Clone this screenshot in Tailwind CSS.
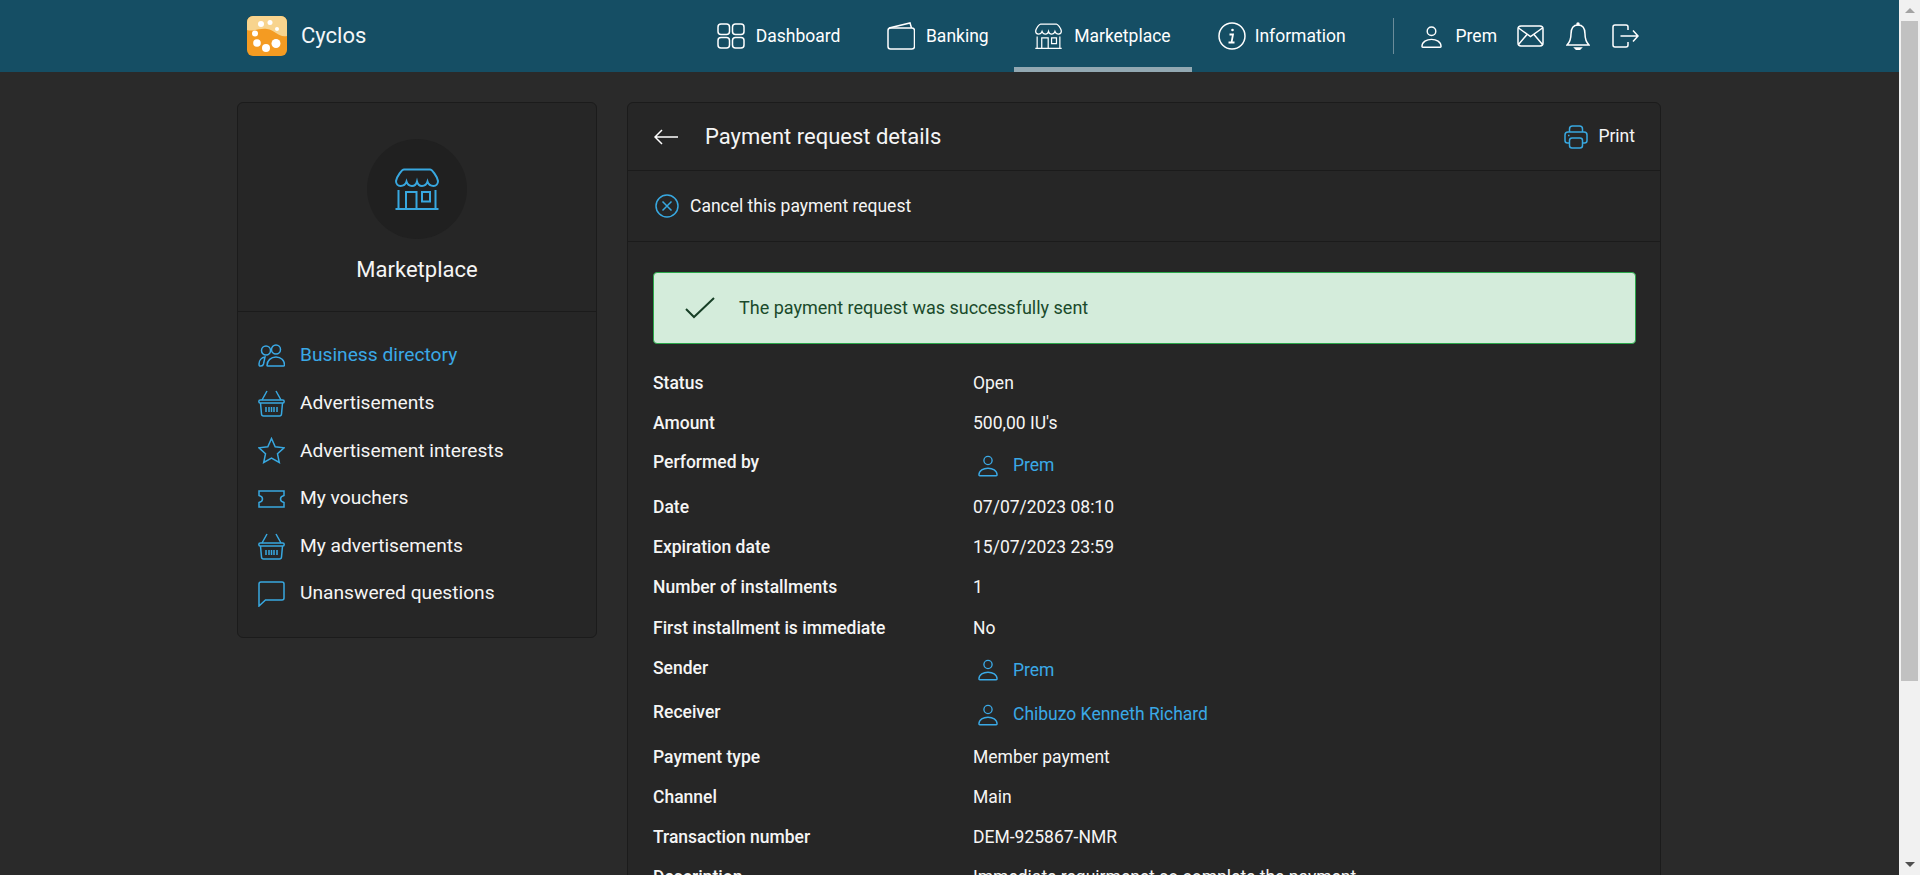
<!DOCTYPE html>
<html lang="en">
<head>
<meta charset="UTF-8">
<title>Payment request details</title>
<script src="https://cdn.jsdelivr.net/npm/@tailwindcss/browser@4"></script>
</head>
<body class="h-[875px] overflow-hidden flex bg-[#2a2a2a] text-[17.500px] text-white font-['Roboto',sans-serif]">

<svg class="hidden">
  <symbol id="store" viewBox="0 0 44 42" fill="none" stroke="currentColor" stroke-width="2">
    <path d="M9 1.500H35C37 1.500 42 8 43 13C43 16 41 18 38.500 18C35.500 18 33.500 16.500 32.500 13.500C31.500 16.500 29.500 18 27 18C24.500 18 22.800 16.500 22 13.500C21.200 16.500 19.500 18 17 18C14.500 18 12.500 16.500 11.500 13.500C10.500 16.500 8.500 18 5.500 18C3 18 1 16 1 13C2 8 7 1.500 9 1.500Z"/>
    <path d="M3.500 22V41M40.500 22V41M0.500 41H43.500M11 41V24H21.500V41M27 24H35V33.500H27Z"/>
  </symbol>
  <symbol id="person" viewBox="0 0 22 24" fill="none" stroke="currentColor" stroke-width="1.500">
    <circle cx="11" cy="6.500" r="4.500"/>
    <path d="M1 22.500C1 17.500 6 15 11 15C16 15 21 17.500 21 22.500C21 23 20.500 23.300 20 23.300H2C1.500 23.300 1 23 1 22.500Z"/>
  </symbol>
  <symbol id="basket" viewBox="0 0 27 27" fill="none" stroke="currentColor" stroke-width="1.500">
    <path d="M9 1L4 10M18 1L23 10"/>
    <rect x="0.800" y="10" width="25.400" height="3" rx="1.500"/>
    <path d="M2.500 13L3.500 24C3.600 25.300 4.500 26 5.500 26H21.500C22.500 26 23.400 25.300 23.500 24L24.500 13"/>
    <path d="M8 17V22M11 17V22M13.500 17V22M16 17V22M19 17V22"/>
  </symbol>
</svg>

<div class="w-[1899px] shrink-0 h-[875px] overflow-hidden">
  <!-- top bar -->
  <header class="h-[72px] bg-[#154e64] flex pl-[247px] pr-[260px]">
    <div class="flex items-center gap-[14px]">
      <svg class="w-[40px] h-[40px]" viewBox="0 0 40 40">
        <rect width="40" height="40" rx="6" fill="#f49b22"/>
        <path d="M0 6A6 6 0 0 1 6 0H34A6 6 0 0 1 40 6V20C32 22 28 14 20 13C12 12 6 16 0 14Z" fill="#f8d48e"/>
        <circle cx="14" cy="8" r="3" fill="#fff"/><circle cx="23" cy="6.500" r="2.500" fill="#fff"/><circle cx="30" cy="13" r="2" fill="#fff"/>
        <circle cx="8" cy="17.500" r="3" fill="#fff"/><circle cx="10" cy="27" r="3.800" fill="#fff"/><circle cx="19" cy="32" r="4" fill="#fff"/><circle cx="29" cy="27.500" r="4.500" fill="#fff"/>
      </svg>
      <span class="text-[22px] leading-none text-[#f4f6f7]">Cyclos</span>
    </div>
    <nav class="ml-auto flex items-stretch">
      <a class="flex items-center gap-[11px] px-[22px] border-b-[5px] border-transparent pt-[5px]">
        <svg class="w-[28px] h-[26px]" viewBox="0 0 28 26" fill="none" stroke="#fff" stroke-width="1.500"><rect x="1" y="1" width="11.500" height="10.500" rx="3"/><rect x="15.500" y="1" width="11.500" height="10.500" rx="3"/><rect x="1" y="14.500" width="11.500" height="10.500" rx="3"/><rect x="15.500" y="14.500" width="11.500" height="10.500" rx="3"/></svg>
        <span>Dashboard</span>
      </a>
      <a class="flex items-center gap-[11px] pl-[24.500px] pr-[25.500px] border-b-[5px] border-transparent pt-[5px]">
        <svg class="w-[28px] h-[28px]" viewBox="0 0 28 28" fill="none" stroke="#fff" stroke-width="1.500"><rect x="1" y="6" width="26.500" height="21" rx="2.500"/><path d="M2 6L23 1L24.500 6"/></svg>
        <span>Banking</span>
      </a>
      <a class="flex items-center gap-[12px] pl-[21px] pr-[21px] border-b-[5px] border-[#92a8b2] pt-[5px]">
        <svg class="w-[27px] h-[26px] text-white"><use href="#store"/></svg>
        <span>Marketplace</span>
      </a>
      <a class="flex items-center gap-[9px] pl-[26px] pr-[22px] border-b-[5px] border-transparent pt-[5px]">
        <svg class="w-[28px] h-[28px]" viewBox="0 0 28 28" fill="none" stroke="#fff" stroke-width="1.500"><circle cx="14" cy="14" r="13"/><circle cx="14.500" cy="8" r="1.300" fill="#fff" stroke="none"/><path d="M11.500 12.500H15L13.500 20.500H16.500M10.500 20.500H13.500" stroke-width="1.800"/></svg>
        <span>Information</span>
      </a>
      <div class="flex items-center ml-[25px]">
        <div class="w-px h-[36px] bg-[#6b8c9a] mr-[27px]"></div>
        <svg class="w-[21px] h-[23px] text-white mr-[14px]"><use href="#person"/></svg>
        <span class="mr-[20px]">Prem</span>
        <svg class="w-[27px] h-[22px] mr-[22px]" viewBox="0 0 27 22" fill="none" stroke="#fff" stroke-width="1.500"><rect x="1" y="1" width="25" height="20" rx="3"/><path d="M1.500 3L13.500 11.500L25.500 3M1.500 19.500L10 9.500M25.500 19.500L17 9.500"/></svg>
        <svg class="w-[24px] h-[28px] mr-[22px]" viewBox="0 0 24 28" fill="none" stroke="#fff" stroke-width="1.500"><path d="M12 3C6.500 3 5 8 5 12C5 17 4 20 1 23H23C20 20 19 17 19 12C19 8 17.500 3 12 3Z"/><circle cx="12" cy="2" r="1" fill="#fff"/><path d="M9 26H15L13.500 27.500H10.500Z" fill="#fff"/></svg>
        <svg class="w-[27px] h-[24px]" viewBox="0 0 27 24" fill="none" stroke="#fff" stroke-width="1.500"><path d="M16 6V3C16 1.800 15.200 1 14 1H3C1.800 1 1 1.800 1 3V21C1 22.200 1.800 23 3 23H14C15.200 23 16 22.200 16 21V18M8.500 12H26M21 6.500L26 12L21 17.500"/></svg>
      </div>
    </nav>
  </header>

  <main class="flex items-start gap-[30px] pl-[237px] pt-[30px]">
    <!-- sidebar -->
    <aside class="w-[360px] h-[536px] shrink-0 bg-[#262626] border border-[#1b1b1b] rounded-[6px]">
      <div class="h-[209px] border-b border-[#1b1b1b] flex flex-col items-center pt-[36px]">
        <div class="w-[100px] h-[100px] rounded-full bg-[#202020] flex items-center justify-center text-[#38a8e0]">
          <svg class="w-[44px] h-[42px]"><use href="#store"/></svg>
        </div>
        <div class="mt-[18px] text-[22px] leading-[26px] text-[#f5f5f5]">Marketplace</div>
      </div>
      <ul class="pt-[20px] pl-[20px] text-[19.200px] text-[#f5f5f5]">
        <li class="h-[47.600px] flex items-center gap-[15px] text-[#3aa9e6]">
          <svg class="w-[27px] h-[24px]" viewBox="0 0 27 24" fill="none" stroke="currentColor" stroke-width="1.500"><circle cx="8" cy="6.500" r="4.500"/><circle cx="18" cy="5.500" r="4.500"/><path d="M1 20C1 16.500 3.500 13.500 7 13L5.500 20Q5 22 3 22H1.500Q1 22 1 20ZM9 21.500C9 16.500 13 13 18 13C23 13 26.500 16.500 26.500 21C26.500 21.500 26 22 25.500 22H10C9.300 22 9 21.800 9 21.500Z"/></svg>
          Business directory
        </li>
        <li class="h-[47.600px] flex items-center gap-[15px]">
          <svg class="w-[27px] h-[27px] text-[#38a8e0]"><use href="#basket"/></svg>
          Advertisements
        </li>
        <li class="h-[47.600px] flex items-center gap-[15px]">
          <svg class="w-[27px] h-[27px] text-[#38a8e0]" viewBox="0 0 27 27" fill="none" stroke="currentColor" stroke-width="1.500"><path d="M13.500 1.500L17.200 9.800L26 10.800L19.500 16.800L21.300 25.500L13.500 21L5.700 25.500L7.500 16.800L1 10.800L9.800 9.800Z"/></svg>
          Advertisement interests
        </li>
        <li class="h-[47.600px] flex items-center gap-[15px]">
          <svg class="w-[27px] h-[18px] text-[#38a8e0]" viewBox="0 0 27 18" fill="none" stroke="currentColor" stroke-width="1.500"><path d="M1 1H26V5.500C24 6 22.500 7 22.500 9C22.500 11 24 12 26 12.500V17H1V12.500C3 12 4.500 11 4.500 9C4.500 7 3 6 1 5.500Z"/></svg>
          My vouchers
        </li>
        <li class="h-[47.600px] flex items-center gap-[15px]">
          <svg class="w-[27px] h-[27px] text-[#38a8e0]"><use href="#basket"/></svg>
          My advertisements
        </li>
        <li class="h-[47.600px] flex items-center gap-[15px]">
          <svg class="w-[27px] h-[26px] text-[#38a8e0]" viewBox="0 0 27 26" fill="none" stroke="currentColor" stroke-width="1.500"><path d="M1 25V3C1 1.800 1.800 1 3 1H24C25.200 1 26 1.800 26 3V17C26 18.200 25.200 19 24 19H7.500Z"/></svg>
          Unanswered questions
        </li>
      </ul>
    </aside>

    <!-- details card -->
    <section class="w-[1034px] shrink-0 bg-[#262626] border border-[#1b1b1b] rounded-t-[6px]">
      <div class="h-[68px] border-b border-[#1b1b1b] flex items-center pl-[26px] pr-[25px]">
        <svg class="w-[24px] h-[16px]" viewBox="0 0 24 16" fill="none" stroke="#fff" stroke-width="1.500"><path d="M24 8H1M8 1L1 8L8 15"/></svg>
        <h1 class="ml-[27px] text-[22px] font-normal text-[#f5f5f5]">Payment request details</h1>
        <div class="ml-auto flex items-center gap-[10px]">
          <svg class="w-[24px] h-[24px]" viewBox="0 0 24 24" fill="none" stroke="#38a8e0" stroke-width="1.500"><path d="M5.500 7V4C5.500 2 6.500 1 8.500 1H15.500C17.500 1 18.500 2 18.500 4V7"/><path d="M5 18H3.500C2 18 1 17 1 15.500V10C1 8 2 7 4 7H20C22 7 23 8 23 10V15.500C23 17 22 18 20.500 18H19"/><rect x="5.500" y="13" width="13" height="10" rx="2.500"/><path d="M4 10.500H5.500"/></svg>
          <span class="text-[#f5f5f5]">Print</span>
        </div>
      </div>
      <div class="h-[71px] border-b border-[#1b1b1b] flex items-center gap-[11px] pl-[27px]">
        <svg class="w-[24px] h-[24px]" viewBox="0 0 24 24" fill="none" stroke="#38a8e0" stroke-width="1.500"><circle cx="12" cy="12" r="11"/><path d="M7.500 7.500L16.500 16.500M16.500 7.500L7.500 16.500"/></svg>
        <span class="text-[#f5f5f5]">Cancel this payment request</span>
      </div>
      <div class="pl-[25px] pr-[24px] pt-[30px]">
        <div class="h-[72px] bg-[#d4ecdb] border border-[#2aa84a] rounded-[4px] flex items-center pl-[31px] text-[18px] text-[#1a4a2b]">
          <svg class="w-[30px] h-[22px]" viewBox="0 0 30 22" fill="none" stroke="#173f26" stroke-width="2"><path d="M1 12L9 20L29 1"/></svg>
          <span class="ml-[24px] pb-[2px]">The payment request was successfully sent</span>
        </div>
        <dl class="mt-[19px] grid grid-cols-[320px_1fr] text-[#f5f5f5] leading-[24px]">
          <dt class="h-[40px] flex items-center font-medium">Status</dt><dd class="h-[40px] flex items-center">Open</dd>
          <dt class="h-[40px] flex items-center font-medium">Amount</dt><dd class="h-[40px] flex items-center">500,00 IU's</dd>
          <dt class="h-[44px] pt-[7px] font-medium">Performed by</dt>
          <dd class="h-[44px] flex items-center gap-[15px] pl-[5px] text-[#3aa9e6]"><svg class="w-[20px] h-[23px]"><use href="#person"/></svg>Prem</dd>
          <dt class="h-[40.200px] flex items-center font-medium">Date</dt><dd class="h-[40.200px] flex items-center">07/07/2023 08:10</dd>
          <dt class="h-[40.200px] flex items-center font-medium">Expiration date</dt><dd class="h-[40.200px] flex items-center">15/07/2023 23:59</dd>
          <dt class="h-[40.200px] flex items-center font-medium">Number of installments</dt><dd class="h-[40.200px] flex items-center">1</dd>
          <dt class="h-[40.200px] flex items-center font-medium">First installment is immediate</dt><dd class="h-[40.200px] flex items-center">No</dd>
          <dt class="h-[44.200px] pt-[8px] font-medium">Sender</dt>
          <dd class="h-[44.200px] flex items-center gap-[15px] pl-[5px] text-[#3aa9e6]"><svg class="w-[20px] h-[23px]"><use href="#person"/></svg>Prem</dd>
          <dt class="h-[44.200px] pt-[8px] font-medium">Receiver</dt>
          <dd class="h-[44.200px] flex items-center gap-[15px] pl-[5px] text-[#3aa9e6]"><svg class="w-[20px] h-[23px]"><use href="#person"/></svg>Chibuzo Kenneth Richard</dd>
          <dt class="h-[41px] flex items-center font-medium">Payment type</dt><dd class="h-[41px] flex items-center">Member payment</dd>
          <dt class="h-[40px] flex items-center font-medium">Channel</dt><dd class="h-[40px] flex items-center">Main</dd>
          <dt class="h-[40px] flex items-center font-medium">Transaction number</dt><dd class="h-[40px] flex items-center">DEM-925867-NMR</dd>
          <dt class="h-[40px] flex items-center font-medium">Description</dt><dd class="h-[40px] flex items-center">Immediate requirmenet so complete the payment</dd>
        </dl>
      </div>
    </section>
  </main>
</div>

<!-- browser scrollbar -->
<div class="w-[21px] shrink-0 h-[875px] bg-[#f1f1f1] flex flex-col items-center">
  <div class="h-[21px] flex items-center justify-center">
    <div class="w-0 h-0 border-x-[5px] border-x-transparent border-b-[5px] border-b-[#a3a3a3]"></div>
  </div>
  <div class="w-[17px] h-[660px] bg-[#c1c1c1]"></div>
  <div class="mt-auto h-[21px] flex items-center justify-center">
    <div class="w-0 h-0 border-x-[5px] border-x-transparent border-t-[5px] border-t-[#505050]"></div>
  </div>
</div>
</body>
</html>
